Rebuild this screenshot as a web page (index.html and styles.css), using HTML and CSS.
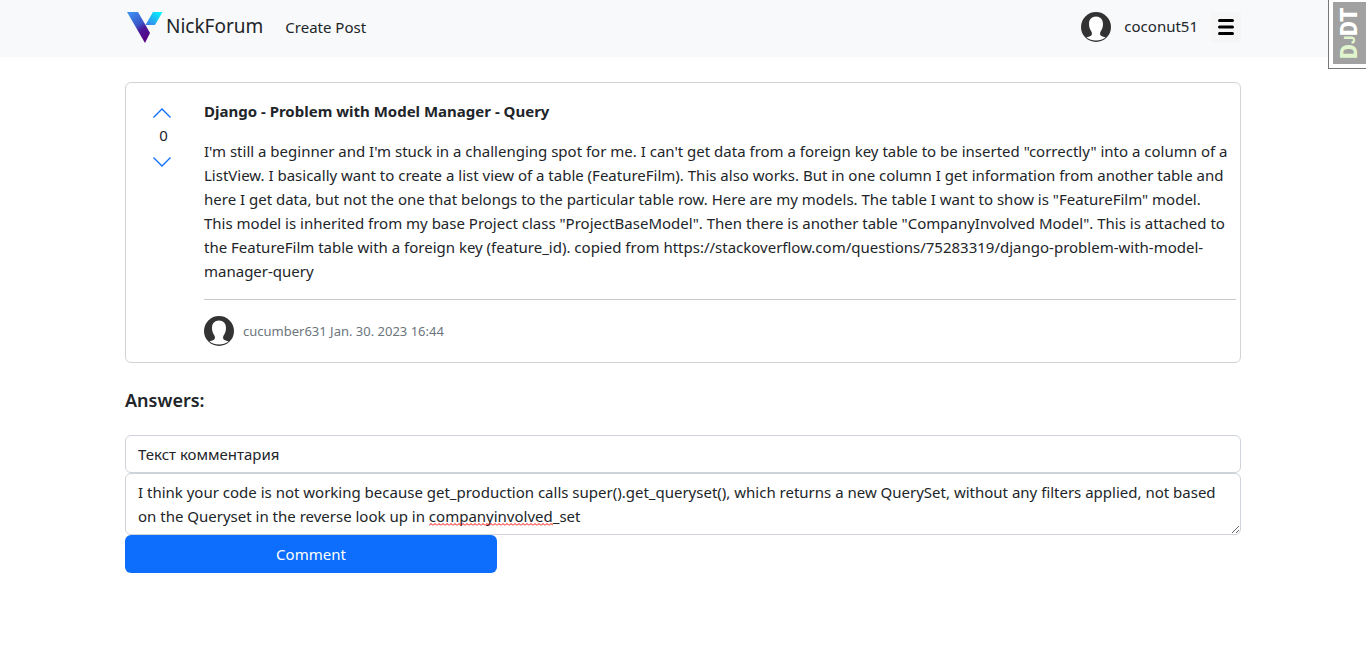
FILE: index.html
```html
<!DOCTYPE html>
<html lang="en">
<head>
<meta charset="utf-8">
<meta name="viewport" content="width=device-width, initial-scale=1">
<title>NickForum</title>
<link rel="stylesheet" href="styles.css">
</head>
<body>
<svg class="defs" aria-hidden="true">
  <defs>
    <linearGradient id="left" x1="0.2" y1="0" x2="0.7" y2="1"><stop offset="0" stop-color="#3d8df0"/><stop offset="0.45" stop-color="#3a55c8"/><stop offset="0.62" stop-color="#4a1a9a"/><stop offset="1" stop-color="#550080"/></linearGradient>
    <linearGradient id="right" x1="1" y1="0" x2="0" y2="1"><stop offset="0" stop-color="#00ffff"/><stop offset="1" stop-color="#3d78e8"/></linearGradient>
    <symbol id="avatar" viewBox="0 0 30 30">
      <circle cx="15" cy="15" r="15" fill="#333"/>
      <path d="M15 4.500c4.200 0 7 2.800 7 7.500 0 3.500-1 5.500-2.500 7.800-.7 1.200-.6 3.200.5 3.900 1.500.9 3 1 4.500 1.800C22 27.500 18.500 28.500 15 28.500s-7-1-9.500-3c1.500-.8 3-.9 4.500-1.800 1.100-.7 1.200-2.700.5-3.900C9 17.500 8 15.500 8 12c0-4.700 2.800-7.500 7-7.500z" fill="#fff"/>
    </symbol>
  </defs>
</svg>
<header class="navbar">
  <div class="container nav-row">
    <a class="brand" href="#">
      <svg class="logo" viewBox="0 0 36 32" aria-hidden="true"><path d="M0 1h11l7.500 13 4.500 8-5 10z" fill="url(#left)"/><path d="M26 1h9.500l-7.500 13H18.500z" fill="url(#right)"/></svg>
      <span class="brand-name">NickForum</span>
    </a>
    <nav><a class="nav-link" href="#">Create Post</a></nav>
    <div class="account">
      <svg class="avatar" role="img" aria-label="coconut51"><use href="#avatar"/></svg>
      <a class="username" href="#">coconut51</a>
      <button class="menu" type="button" aria-label="Menu"><svg viewBox="0 0 30 30" aria-hidden="true"><path d="M8.500 8.500h13M8.500 15h13M8.500 21.500h13" stroke="#000" stroke-width="3" stroke-linecap="round"/></svg></button>
    </div>
  </div>
</header>
<button class="debug" type="button" aria-label="Show toolbar"><span class="debug-label"><span class="debug-dj">D<small>J</small></span>DT</span></button>
<main class="container">
  <article class="card">
    <div class="votes">
      <button class="vote" type="button" aria-label="Vote up"><svg viewBox="0 0 20 12" aria-hidden="true"><path d="M1.500 10.500 10 2l8.500 8.500"/></svg></button>
      <span class="score">0</span>
      <button class="vote" type="button" aria-label="Vote down"><svg viewBox="0 0 20 12" aria-hidden="true"><path d="M1.500 1.500 10 10l8.500-8.500"/></svg></button>
    </div>
    <div class="post">
      <h1 class="title">Django - Problem with Model Manager - Query</h1>
      <p class="text">I'm still a beginner and I'm stuck in a challenging spot for me. I can't get data from a foreign key table to be inserted "correctly" into a column of a ListView. I basically want to create a list view of a table (FeatureFilm). This also works. But in one column I get information from another table and here I get data, but not the one that belongs to the particular table row. Here are my models. The table I want to show is "FeatureFilm" model. This model is inherited from my base Project class "ProjectBaseModel". Then there is another table "CompanyInvolved Model". This is attached to the FeatureFilm table with a foreign key (feature_id). copied from https://stackoverflow.com/questions/75283319/django-problem-with-model-manager-query</p>
      <footer class="meta">
        <svg class="avatar" role="img" aria-label="cucumber631"><use href="#avatar"/></svg>
        <span>cucumber631 Jan. 30. 2023 16:44</span>
      </footer>
    </div>
  </article>
  <h2 class="answers">Answers:</h2>
  <form class="reply">
    <input class="field" type="text" aria-label="Заголовок" value="Текст комментария">
    <div class="area">
      <textarea class="field" rows="2" aria-label="Комментарий">I think your code is not working because get_production calls super().get_queryset(), which returns a new QuerySet, without any filters applied, not based on the Queryset in the reverse look up in companyinvolved_set</textarea>
      <svg class="squiggle" aria-hidden="true"><defs><pattern id="wave" width="4" height="3" patternUnits="userSpaceOnUse"><path d="M0 2.500 2 .5l2 2" fill="none" stroke="#f00"/></pattern></defs><rect width="100%" height="3" fill="url(#wave)"/></svg>
    </div>
    <button class="submit" type="button">Comment</button>
  </form>
</main>
</body>
</html>
```
FILE: styles.css
```css
*, *::before, *::after { box-sizing: border-box; }
body {
  margin: 0;
  font-family: "Noto Sans", "Open Sans", sans-serif;
  font-size: 15px;
  line-height: 24px;
  color: #212529;
  background: #fff;
}
a { color: inherit; text-decoration: none; }
button { font: inherit; border: 0; padding: 0; background: none; cursor: pointer; }
svg { display: block; }
.defs { position: absolute; width: 0; height: 0; }
.container { width: 100%; max-width: 1140px; margin: 0 auto; padding: 0 12px; }
.navbar { background: #f8f9fa; padding: 11px 0 14px; }
.nav-row { display: flex; align-items: center; }
.brand { display: flex; align-items: center; gap: 3px; padding-left: 2px; font-size: 19px; }
.brand-name { padding-bottom: 2px; }
.logo { width: 36px; height: 32px; }
.nav-link { margin-left: 22px; }
.account { display: flex; align-items: center; margin-left: auto; }
.avatar { width: 30px; height: 30px; flex: none; }
.username { margin: 0 13px; padding-bottom: 2px; }
.menu { width: 30px; height: 30px; background: #f6f6f6; }
.debug {
  position: absolute; top: 0; right: 0;
  width: 38px; height: 69px; padding: 2px 0 4px 4px;
  background: #fff; border: 1px solid #777; border-width: 0 0 1px 1px;
}
.debug-label {
  display: flex; align-items: center; justify-content: center;
  width: 100%; height: 100%;
  writing-mode: vertical-rl; rotate: 180deg;
  background: #a0a1a0; color: #fff;
  font-family: Roboto, sans-serif;
  font-size: 23px; font-weight: 900; line-height: 24px;
}
.debug-dj { color: #e0f5cd; }
.debug-dj small { font-size: 15px; }
.card {
  display: flex; margin-top: 25px; padding: 16px 4px 16px 0;
  border: 1px solid #d2d3d4; border-radius: 6px;
}
.votes { flex: none; display: flex; flex-direction: column; align-items: center; width: 78px; padding: 8px 7px 0 0; }
.vote svg { width: 20px; height: 12px; fill: none; stroke: #0d6efd; stroke-width: 1.3; }
.score { padding-left: 4px; margin: 4px 0 9px; line-height: 24px; }
.post { flex: 1; min-width: 0; }
.title { margin: 0 0 16px; font-size: 15px; line-height: 24px; font-weight: 700; }
.text { margin: 0 0 16px; padding-right: 4px; }
.meta { display: flex; align-items: center; gap: 9px; padding-top: 16px; border-top: 1px solid #c8c9ca; color: #6c757d; font-size: 13px; }
.answers { margin: 24px 0 22px; font-size: 18px; line-height: 26px; font-weight: 600; }
.field {
  display: block; width: 100%; margin: 0; padding: 6px 12px;
  font: inherit; color: inherit; background: #fff;
  border: 1px solid #ced4da; border-radius: 6px; outline: 0;
}
textarea.field { resize: vertical; overflow: hidden; }
.area { position: relative; }
.squiggle { position: absolute; left: 304px; top: 50px; width: 124px; height: 3px; }
.submit { display: block; width: 33.3333%; padding: 7px 12px; color: #fff; background: #0d6efd; border-radius: 6px; }
```
